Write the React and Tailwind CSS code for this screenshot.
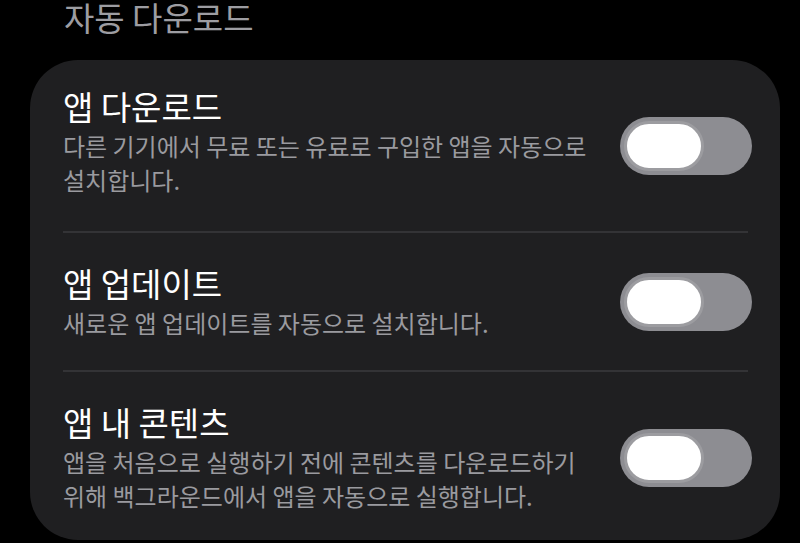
const items = [
  {
    title: '앱 다운로드',
    desc: ['다른 기기에서 무료 또는 유료로 구입한 앱을 자동으로', '설치합니다.'],
  },
  {
    title: '앱 업데이트',
    desc: ['새로운 앱 업데이트를 자동으로 설치합니다.'],
  },
  {
    title: '앱 내 콘텐츠',
    desc: ['앱을 처음으로 실행하기 전에 콘텐츠를 다운로드하기', '위해 백그라운드에서 앱을 자동으로 실행합니다.'],
  },
]

function Toggle({ className = '' }) {
  return (
    <div className={`flex h-[58px] w-[132px] shrink-0 items-center rounded-full bg-[#8d8d92] p-[4px] ${className}`}>
      <div className="h-[50px] w-[80px] rounded-full border-[3px] border-[#9c9ca0] bg-white" />
    </div>
  )
}

export default function App() {
  return (
    <div
      className="h-[543px] w-[800px] overflow-hidden bg-black"
      style={{ fontFamily: '"Noto Sans CJK KR", "Noto Sans", sans-serif' }}
    >
      <h1 className="pl-[64px] text-[33px] leading-[34px] text-[#9d9da2]">자동 다운로드</h1>
      <section className="mt-[26px] ml-[30px] w-[750px] rounded-[48px] bg-[#1f1f21] pl-[33px] pr-[28px] pt-[26px]">
        {items.map((item, i) => (
          <div key={item.title}>
            {i > 0 && <div className="mr-[4px] h-[2px] bg-[#333336]" />}
            <div
              className={`flex items-center justify-between ${
                i === 0 ? 'pb-[34px]' : i === 1 ? 'py-[30px]' : 'pt-[30px] pb-[27px]'
              }`}
            >
              <div>
                <div className="text-[33px] leading-[40px] text-white">{item.title}</div>
                <div className="mt-[3px] text-[24px] leading-[34px] text-[#9a9a9f]">
                  {item.desc.map((line) => (
                    <div key={line}>{line}</div>
                  ))}
                </div>
              </div>
              <Toggle className={i === 0 ? 'mt-[8px]' : ''} />
            </div>
          </div>
        ))}
      </section>
    </div>
  )
}
